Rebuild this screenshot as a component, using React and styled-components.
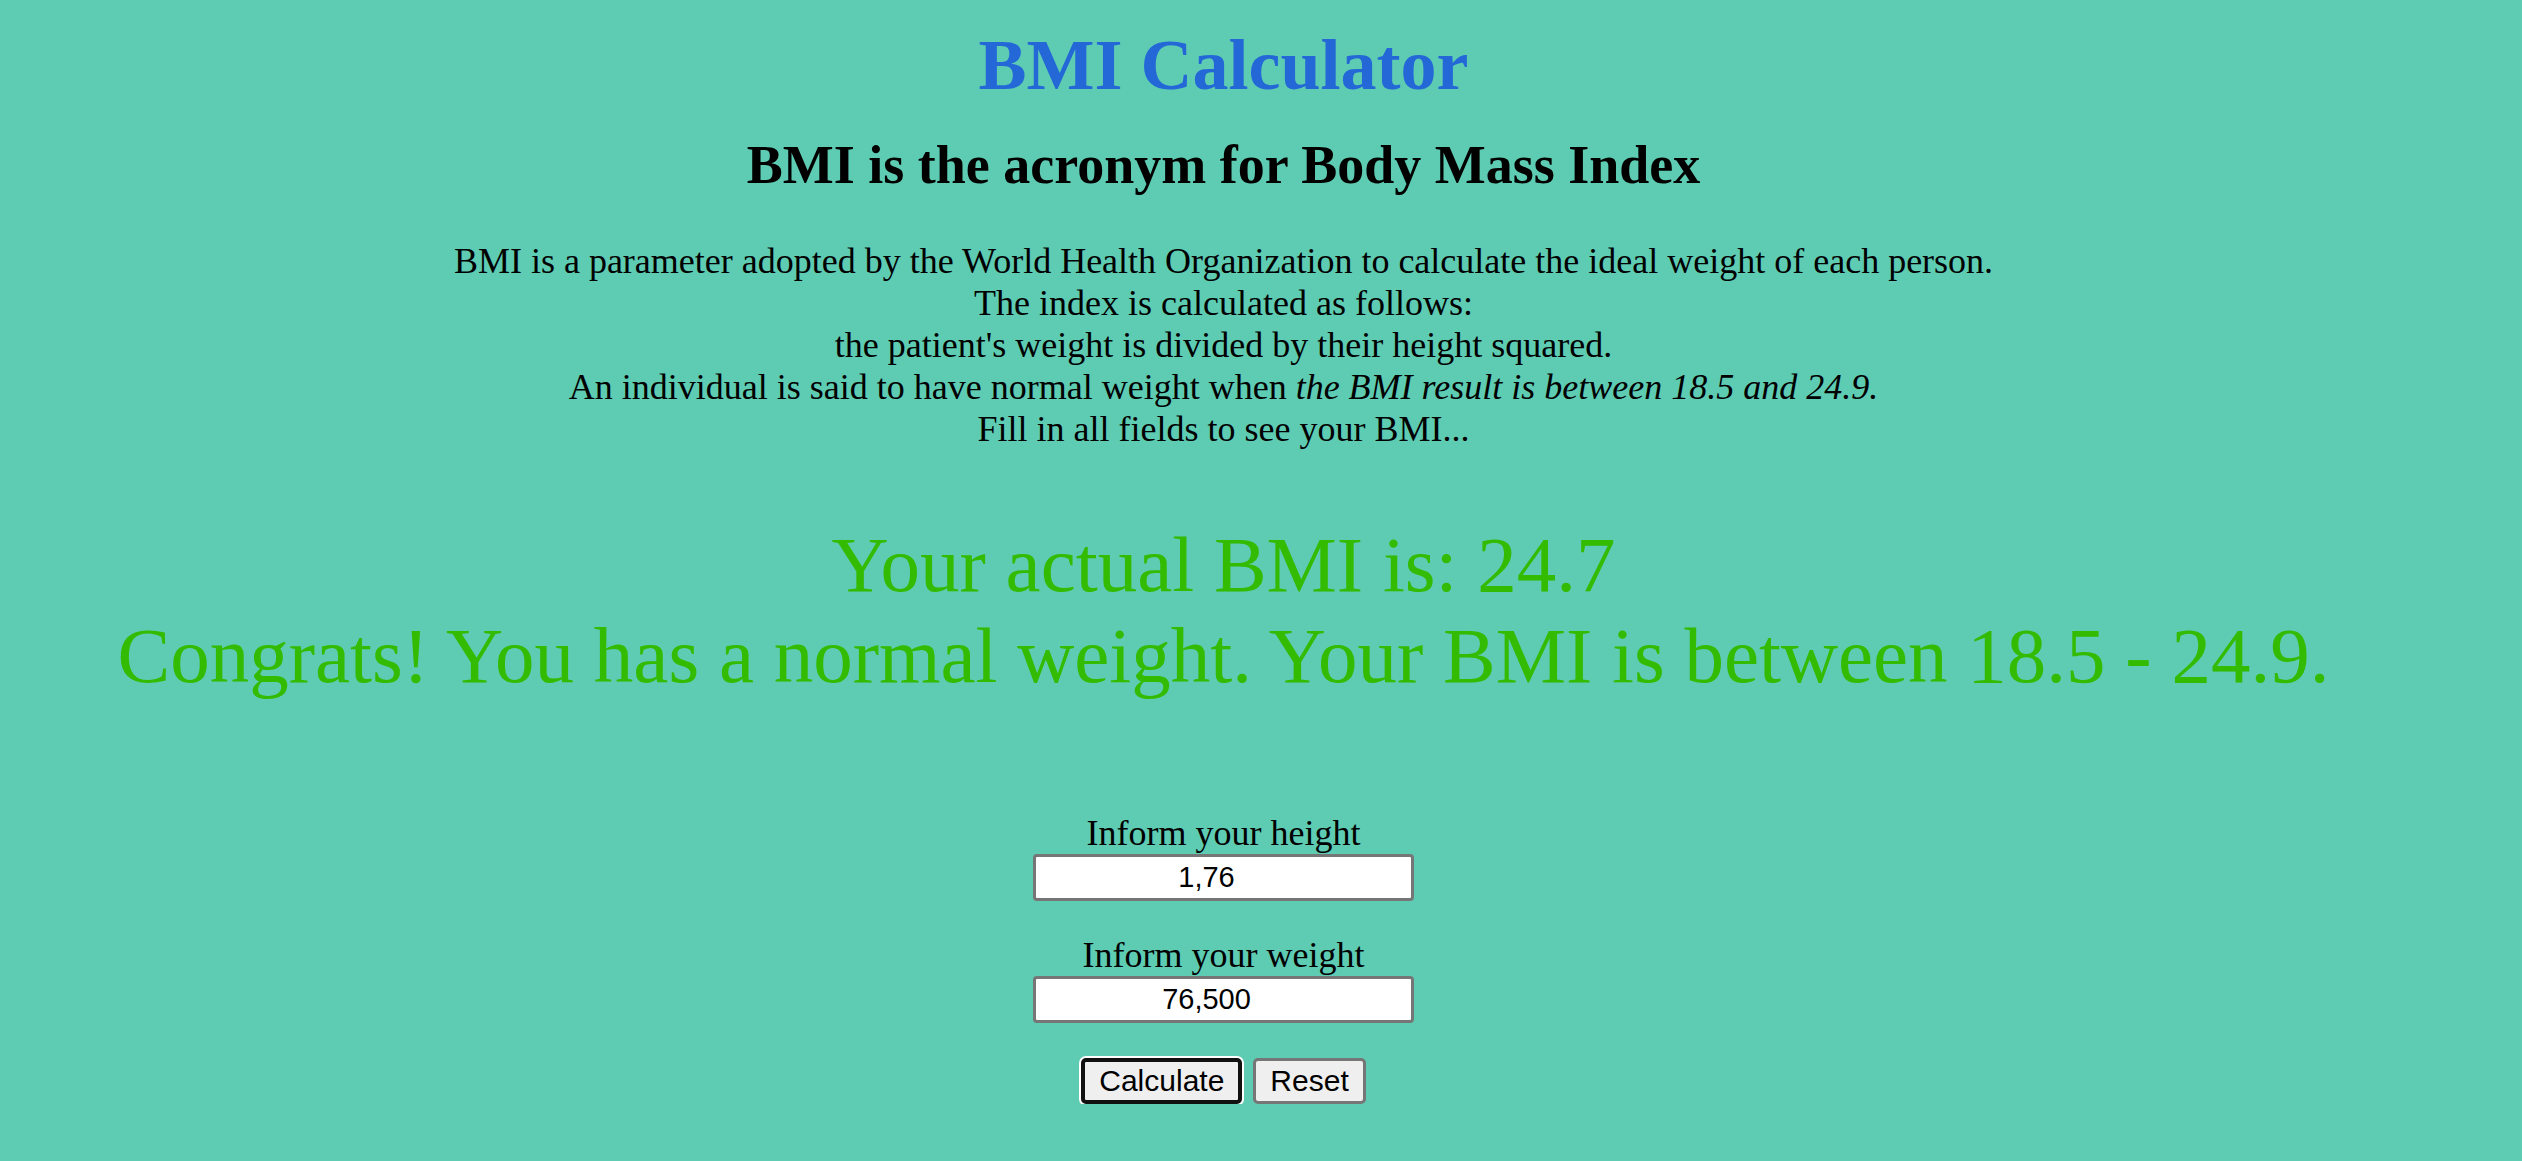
import { useState } from 'react'
import styled, { createGlobalStyle } from 'styled-components'

const GlobalStyle = createGlobalStyle`
    html, body {
        margin: 0;
        padding: 0;
        background: #5ecbb3;
    }
    body {
        font-family: "Liberation Serif", "Times New Roman", serif;
        color: #000;
    }
`

const Page = styled.main`
    width: 2447px;
    padding-top: 24px;
    display: flex;
    flex-direction: column;
    align-items: center;
    text-align: center;
`

const Title = styled.h1`
    margin: 0;
    font-size: 72px;
    line-height: 83px;
    font-weight: 700;
    color: #2468d8;
`

const Subtitle = styled.h2`
    margin: 27px 0 0;
    font-size: 54px;
    line-height: 62px;
    font-weight: 700;
`

const Intro = styled.p`
    margin: 44px 0 0;
    font-size: 36px;
    line-height: 42px;

    em { font-style: italic; }
`

const Result = styled.div`
    margin-top: 69px;
    font-size: 79px;
    line-height: 91px;
    color: #33bb00;
`

const Form = styled.form`
    margin-top: 111px;
    display: flex;
    flex-direction: column;
    align-items: center;
`

const Field = styled.label`
    display: flex;
    flex-direction: column;
    align-items: center;
    margin-top: ${p => p.$first ? 0 : 33}px;
    font-size: 36px;
    line-height: 42px;
`

// the original is a number field: its hidden spinner keeps the value off centre
const Input = styled.input`
    box-sizing: border-box;
    width: 381px;
    height: 47px;
    margin: 0;
    padding: 0 38px 0 4px;
    border: 3px solid #767676;
    border-radius: 4px;
    background: #fff;
    font-family: "Liberation Sans", Arial, sans-serif;
    font-size: 29px;
    text-align: center;
    color: #000;
    outline: none;
`

const Buttons = styled.div`
    margin-top: 35px;
    display: flex;
    gap: 11px;
    align-items: center;
`

const Button = styled.button`
    box-sizing: border-box;
    height: 46px;
    padding: 0 14px;
    background: #efefef;
    border: ${p => p.$focused ? '4px solid #111' : '3px solid #767676'};
    border-radius: 5px;
    box-shadow: ${p => p.$focused ? '0 0 0 2px #fff' : 'none'};
    font-family: "Liberation Sans", Arial, sans-serif;
    font-size: 30px;
    color: #000;
    cursor: pointer;
`

export default function App() {
    const [height, setHeight] = useState('1,76')
    const [weight, setWeight] = useState('76,500')

    return <>
        <GlobalStyle />
        <Page>
            <Title>BMI Calculator</Title>
            <Subtitle>BMI is the acronym for Body Mass Index</Subtitle>
            <Intro>
                BMI is a parameter adopted by the World Health Organization to calculate the ideal weight of each person.<br />
                The index is calculated as follows:<br />
                the patient's weight is divided by their height squared.<br />
                An individual is said to have normal weight when <em>the BMI result is between 18.5 and 24.9.</em><br />
                Fill in all fields to see your BMI...
            </Intro>
            <Result>
                Your actual BMI is: 24.7<br />
                Congrats! You has a normal weight. Your BMI is between 18.5 - 24.9.
            </Result>
            <Form onSubmit={e => e.preventDefault()}>
                <Field $first>
                    Inform your height
                    <Input value={height} onChange={e => setHeight(e.target.value)} />
                </Field>
                <Field>
                    Inform your weight
                    <Input value={weight} onChange={e => setWeight(e.target.value)} />
                </Field>
                <Buttons>
                    <Button type="submit" $focused>Calculate</Button>
                    <Button type="reset">Reset</Button>
                </Buttons>
            </Form>
        </Page>
    </>
}
